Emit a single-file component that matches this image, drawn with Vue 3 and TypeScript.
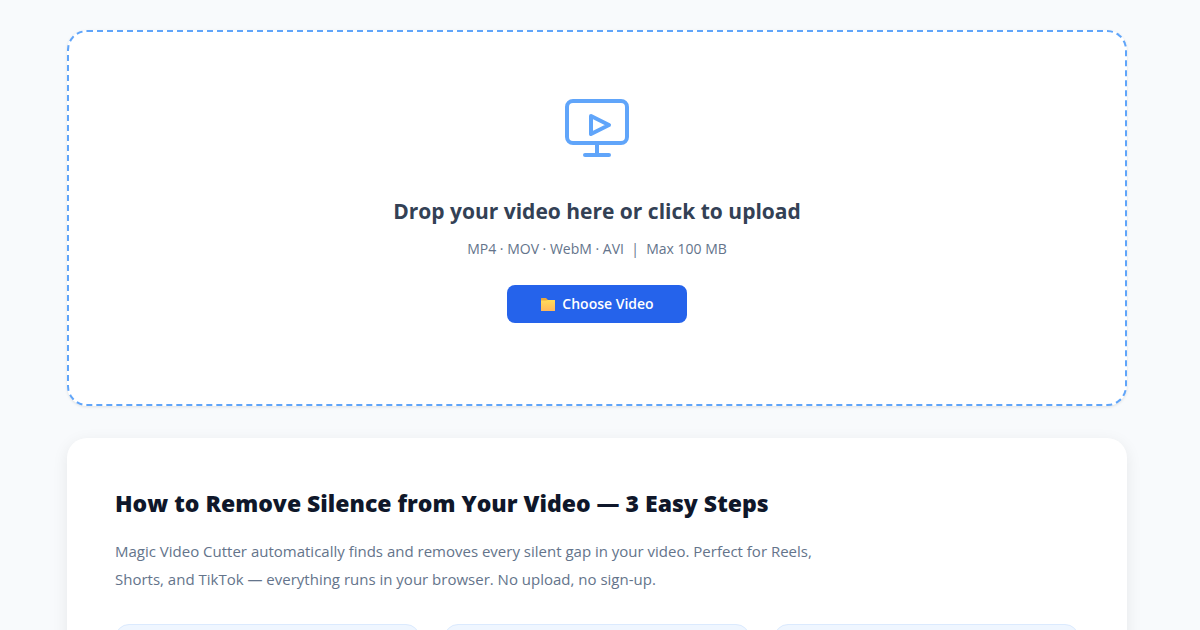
<script setup lang="ts">
import { ref } from 'vue'

const formats: string[] = ['MP4', 'MOV', 'WebM', 'AVI']
const steps: number[] = [1, 2, 3]
const picker = ref<HTMLInputElement | null>(null)

function choose(): void {
  picker.value?.click()
}
</script>

<template>
  <main class="page">
    <section class="drop">
      <svg class="monitor" viewBox="0 0 72 72" fill="none" stroke="#60a5fa" stroke-width="4" stroke-linecap="round" stroke-linejoin="round" aria-hidden="true">
        <rect x="6" y="9" width="60" height="42" rx="6" />
        <path d="M30 24 48 33 30 42Z" />
        <path d="M36 51v12M24 63h24" />
      </svg>
      <h1 class="drop-title">Drop your video here or click to upload</h1>
      <p class="hint">{{ formats.join(' · ') }} &nbsp;|&nbsp; Max 100 MB</p>
      <button class="choose" type="button" @click="choose">
        <svg class="folder" viewBox="0 0 16 16" aria-hidden="true">
          <defs>
            <linearGradient id="folder-front" x1="0" y1="0" x2="0" y2="1">
              <stop offset="0" stop-color="#ffdc5a" />
              <stop offset="1" stop-color="#ffb75b" />
            </linearGradient>
          </defs>
          <path d="M1 2.5Q1 2 1.5 2H6l2 2h6.500q.5 0 .5.5V8H1Z" fill="#e9a83c" />
          <path d="M1 4.500h5L8 4h6.500q.5 0 .5.5v10q0 .5-.5.5h-13Q1 15 1 14.500Z" fill="url(#folder-front)" />
        </svg>
        <span>Choose Video</span>
      </button>
      <input ref="picker" type="file" accept="video/*" aria-label="Video file" hidden />
    </section>

    <section class="guide">
      <h2 class="guide-title">How to Remove Silence from Your Video — 3 Easy Steps</h2>
      <p class="intro">
        Magic Video Cutter automatically finds and removes every silent gap in your video. Perfect for Reels,
        Shorts, and TikTok — everything runs in your browser. No upload, no sign-up.
      </p>
      <div class="steps">
        <article v-for="step in steps" :key="step" class="step"></article>
      </div>
    </section>
  </main>
</template>

<style>
body {
  margin: 0;
  background: #f8fafc;
}
</style>

<style scoped>
.page {
  box-sizing: border-box;
  height: 100vh;
  overflow: hidden;
  padding: 30px 26px 0 20px;
  background: #f8fafc;
  font-family: "Segoe UI", "Open Sans", "Noto Sans", sans-serif;
}
.drop,
.guide {
  box-sizing: border-box;
  max-width: 1060px;
  margin: 0 auto;
  background: #fff;
}
.drop {
  display: flex;
  flex-direction: column;
  align-items: center;
  padding: 60px 24px 81px;
  border: 2px dashed #60a5fa;
  border-radius: 20px;
  box-shadow: 0 1px 3px rgba(0, 0, 0, 0.1);
  text-align: center;
}
.monitor {
  width: 72px;
  height: 72px;
}
.drop-title {
  margin: 30px 0 0;
  color: #334155;
  font-size: 21px;
  font-weight: 700;
  line-height: 34px;
}
.hint {
  margin: 10px 0 0;
  color: #64748b;
  font-size: 14px;
  line-height: 22px;
}
.choose {
  display: flex;
  align-items: center;
  justify-content: center;
  gap: 6px;
  margin-top: 25px;
  padding: 9px 33px;
  border: 0;
  border-radius: 8px;
  background: #2563eb;
  color: #fff;
  font-family: inherit;
  font-size: 14px;
  font-weight: 600;
  line-height: 20px;
  cursor: pointer;
}
.folder {
  width: 16px;
  height: 16px;
}
.guide {
  margin-top: 32px;
  padding: 48px;
  border-radius: 20px;
  box-shadow: 0 4px 16px rgba(0, 0, 0, 0.08);
}
.guide-title {
  margin: 0;
  color: #0f172a;
  font-size: 23px;
  font-weight: 800;
  line-height: 34px;
}
.intro {
  max-width: 700px;
  margin: 17px 0 0;
  color: #64748b;
  font-size: 15px;
  line-height: 28px;
}
.steps {
  display: grid;
  grid-template-columns: repeat(3, 1fr);
  gap: 24px;
  margin-top: 31px;
}
.step {
  min-height: 180px;
  border: 1px solid #dbeafe;
  border-radius: 14px;
  background: #eff6ff;
}
</style>
